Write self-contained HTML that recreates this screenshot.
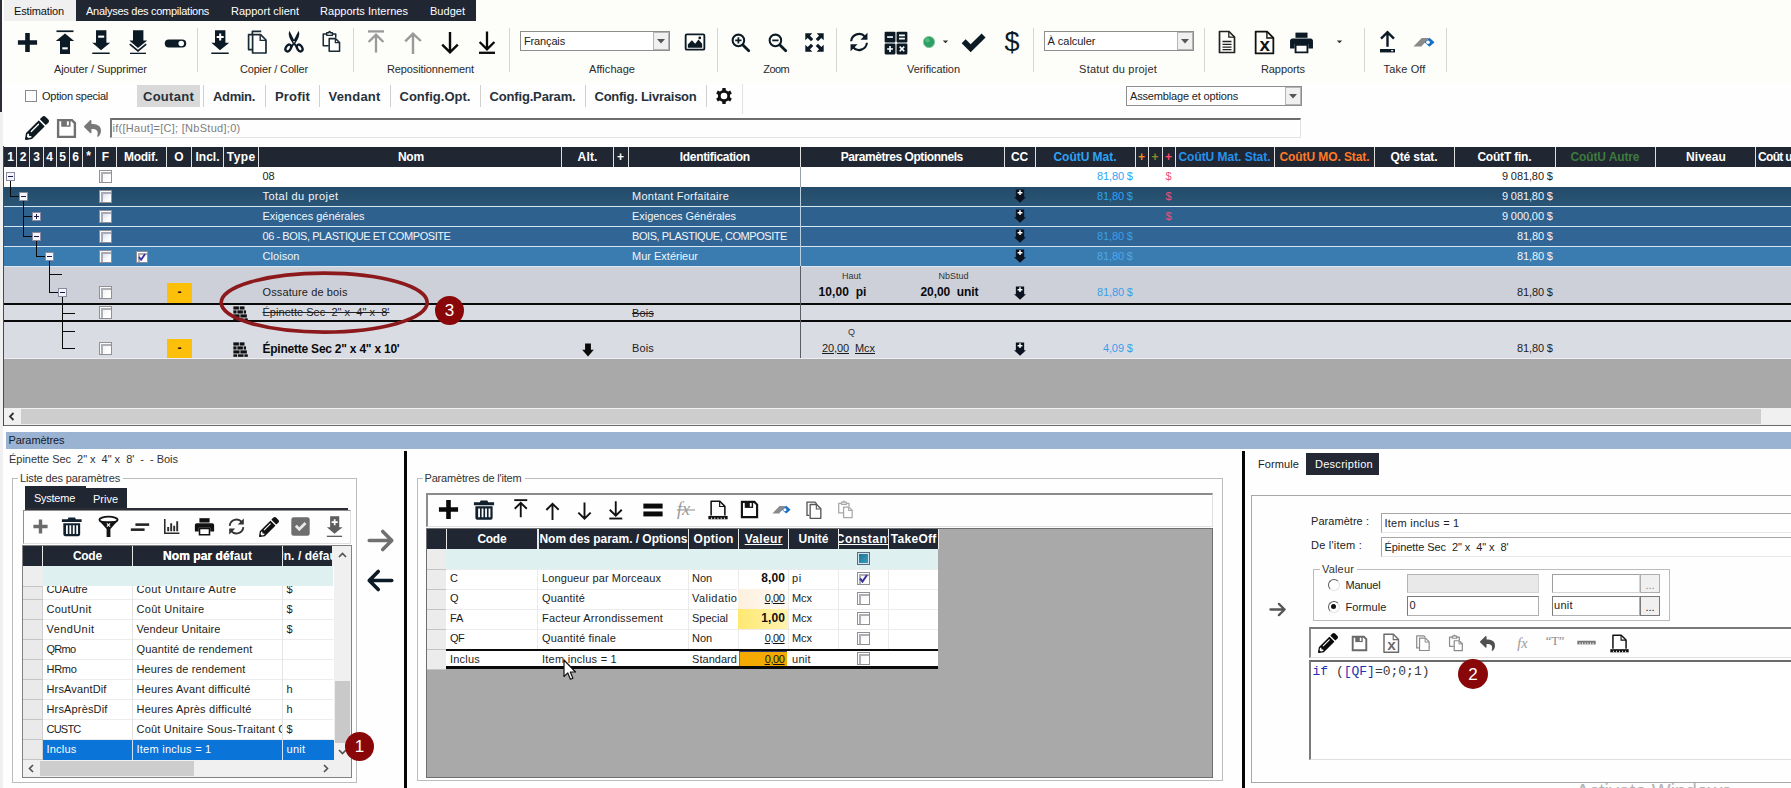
<!DOCTYPE html>
<html lang="fr"><head><meta charset="utf-8"><title>Estimation</title>
<style>
html,body{margin:0;padding:0;}
body{width:1791px;height:788px;overflow:hidden;background:#fefefe;font-family:"Liberation Sans", sans-serif;font-size:11px;color:#1a1a1a;}
#app{position:relative;width:1791px;height:788px;overflow:hidden;}
#app div,#app span,#app svg{position:absolute;box-sizing:border-box;}
#app span{white-space:pre;}
#app svg{overflow:visible;}
</style></head><body>
<div id="app">
<div style="left:0px;top:0px;width:1791px;height:83px;background:#fdfdfa;"></div>
<div style="left:0px;top:112px;width:2.5px;height:676px;background:#f0f0f0;"></div>
<div style="left:0px;top:0px;width:1.5px;height:112px;background:#2a2d36;"></div>
<div style="left:76px;top:0px;width:400px;height:21px;background:#212633;"></div>
<div style="left:4px;top:0px;width:72px;height:21px;background:#f0f0f0;"></div>
<span style="left:14.00px;top:4.00px;line-height:14px;color:#111;letter-spacing:-0.136px;">Estimation</span>
<span style="left:86.00px;top:4.00px;line-height:14px;color:#fff;letter-spacing:-0.265px;">Analyses des compilations</span>
<span style="left:231.00px;top:4.00px;line-height:14px;color:#fff;letter-spacing:0.009px;">Rapport client</span>
<span style="left:320.00px;top:4.00px;line-height:14px;color:#fff;letter-spacing:0.033px;">Rapports Internes</span>
<span style="left:430.00px;top:4.00px;line-height:14px;color:#fff;letter-spacing:0.021px;">Budget</span>
<svg style="left:15.5px;top:30.5px;color:#0c1a26;" width="23" height="23" viewBox="0 0 24 24"><path fill="currentColor" d="M9.6 2h4.8v7.6H22v4.8h-7.6V22H9.6v-7.6H2V9.6h7.6z"/></svg>
<svg style="left:52.5px;top:29.5px;color:#0c1a26;" width="24" height="24" viewBox="0 0 24 24"><rect x="3.500" y="0.400" width="17" height="1.700" fill="currentColor"/><path fill="currentColor" d="M12 3.400 21.200 11H17V24H7V11H2.800z"/><rect x="9.300" y="17.300" width="5.400" height="2.100" fill="#fff"/></svg>
<svg style="left:88.5px;top:30.0px;color:#0c1a26;" width="24" height="24" viewBox="0 0 24 24"><rect x="3.300" y="22.500" width="17.400" height="1.500" fill="currentColor"/><path fill="currentColor" d="M7 0.300h10.400v12.500h3.800L12 20.200 3.300 12.800H7z"/><rect x="9.200" y="5.600" width="6" height="2.100" fill="#fff"/></svg>
<svg style="left:126.0px;top:30.0px;color:#0c1a26;" width="24" height="24" viewBox="0 0 24 24"><rect x="4" y="22.700" width="16" height="1.300" fill="currentColor"/><path fill="currentColor" d="M7 0.300h10.400v10.200h3.800L12 18 3.300 10.500H7z"/><path fill="none" stroke="currentColor" stroke-width="1.700" d="M3.800 14.200 12 21 20.200 14.200"/></svg>
<svg style="left:163.5px;top:31.5px;color:#0c1a26;" width="23" height="23" viewBox="0 0 24 24"><rect x="0.800" y="7.700" width="22.400" height="8.600" rx="4.300" fill="currentColor"/><circle cx="18" cy="12" r="2.900" fill="#fff"/></svg>
<svg style="left:208.0px;top:30.0px;color:#0c1a26;" width="24" height="24" viewBox="0 0 24 24"><rect x="3.300" y="22.500" width="17.400" height="1.500" fill="currentColor"/><path fill="currentColor" d="M7 0.300h10.400v12.500h3.800L12 20.200 3.300 12.800H7z"/><path fill="#fff" d="M11.200 3.600h2v2.500h2.500v2h-2.500v2.500h-2V8.100H8.700v-2h2.500z"/></svg>
<svg style="left:245.0px;top:30.0px;color:#1a2a36;" width="24" height="24" viewBox="0 0 24 24"><path fill="none" stroke="currentColor" stroke-width="1.700" stroke-linejoin="round" d="M7.400 4.600V1.400h8.800M7.400 4.600H3.600v15h3.600"/><path fill="#fff" stroke="currentColor" stroke-width="1.700" stroke-linejoin="round" d="M7.600 4.600h8l5.400 5.400V23H7.600z"/><path fill="none" stroke="currentColor" stroke-width="1.400" d="M15.200 4.800v5.600h5.600"/></svg>
<svg style="left:282.0px;top:30.0px;color:#0c1a26;" width="24" height="24" viewBox="0 0 24 24"><g fill="none" stroke="currentColor" stroke-width="2.300"><ellipse cx="6.300" cy="18" rx="2.400" ry="3.700" transform="rotate(32 6.300 18)"/><ellipse cx="17.700" cy="18" rx="2.400" ry="3.700" transform="rotate(-32 17.700 18)"/></g><path fill="currentColor" d="M7.400 0.800c-1.300 2.800-.6 5.800 1 8.600l2.300 4-2.600 3 1.900 1.300L12 14.800l2 2.900 1.900-1.300-2.600-3 2.300-4c1.600-2.800 2.300-5.800 1-8.600L12 9.800z"/><circle cx="12" cy="11.800" r="0.800" fill="#fff"/></svg>
<svg style="left:320.0px;top:30.0px;color:#1a2a36;" width="23" height="23" viewBox="0 0 24 24"><path fill="none" stroke="currentColor" stroke-width="1.6" stroke-linejoin="round" d="M9 16.400H3.400V4.200h3.400M13 4.200h3.400v4"/><path fill="none" stroke="currentColor" stroke-width="1.5" stroke-linejoin="round" d="M7 5.600V2.800h2.200c0-1.800 1.600-1.800 1.600 0H13v2.800z"/><path fill="#fff" stroke="currentColor" stroke-width="1.6" stroke-linejoin="round" d="M9.600 9h6.600l4.200 4v9.200H9.600z"/><path fill="none" stroke="currentColor" stroke-width="1.3" d="M16 9.200v4h4.200"/></svg>
<svg style="left:364.0px;top:30.0px;color:#9a9a9a;" width="24" height="24" viewBox="0 0 24 24"><g fill="none" stroke="currentColor" stroke-width="2.300"><path d="M4 1.400h16"/><path d="M12 22.500V5M4.600 12 12 4.600l7.400 7.400"/></g></svg>
<svg style="left:401.0px;top:30.0px;color:#9a9a9a;" width="24" height="24" viewBox="0 0 24 24"><g fill="none" stroke="currentColor" stroke-width="2.400"><path d="M12 24V4M4.200 11.400 12 3.600l7.800 7.400"/></g></svg>
<svg style="left:438.0px;top:30.0px;color:#0a0a0a;" width="24" height="24" viewBox="0 0 24 24"><g fill="none" stroke="currentColor" stroke-width="2.400"><path d="M12 2V22M4.200 14.600 12 22.400l7.800-7.800"/></g></svg>
<svg style="left:475.0px;top:30.0px;color:#0a0a0a;" width="24" height="24" viewBox="0 0 24 24"><g fill="none" stroke="currentColor" stroke-width="2.300"><path d="M4 22.800h16"/><path d="M12 1.500V19M4.600 12 12 19.400l7.400-7.400"/></g></svg>
<svg style="left:684.0px;top:31.0px;color:#0c1a26;" width="22" height="22" viewBox="0 0 24 24"><rect x="1.800" y="3.600" width="20.400" height="16.800" rx="1.400" fill="none" stroke="currentColor" stroke-width="2"/><path fill="currentColor" d="M4.200 18.200v-3.400L8.600 10.200l3.600 3.800 3.600-4.600 4 4.600v4.200z"/><circle cx="17.200" cy="7.600" r="1.500" fill="currentColor"/></svg>
<svg style="left:729.5px;top:31.5px;color:#0c1a26;" width="21" height="21" viewBox="0 0 24 24"><circle cx="9.600" cy="9.600" r="6.600" fill="none" stroke="currentColor" stroke-width="2.300"/><path stroke="currentColor" stroke-width="3.200" stroke-linecap="round" d="M14.800 14.800 21.400 21.400"/><path stroke="currentColor" stroke-width="2" d="M6 9.600h7.200M9.600 6v7.200"/></svg>
<svg style="left:766.5px;top:31.5px;color:#0c1a26;" width="21" height="21" viewBox="0 0 24 24"><circle cx="9.600" cy="9.600" r="6.600" fill="none" stroke="currentColor" stroke-width="2.300"/><path stroke="currentColor" stroke-width="3.200" stroke-linecap="round" d="M14.800 14.800 21.400 21.400"/><path stroke="currentColor" stroke-width="2" d="M6 9.600h7.200"/></svg>
<svg style="left:803.5px;top:31.5px;color:#0c1a26;" width="21" height="21" viewBox="0 0 24 24"><g fill="currentColor"><path d="M1.500 1.500h8L6.800 4.200l3.800 3.800-2.600 2.600-3.800-3.800L1.500 9.500z"/><path d="M22.500 1.500v8l-2.700-2.700-3.800 3.800-2.600-2.600 3.800-3.800L14.500 1.500z"/><path d="M1.500 22.500v-8l2.700 2.700 3.800-3.800 2.600 2.600-3.800 3.800L9.500 22.500z"/><path d="M22.500 22.500h-8l2.700-2.700-3.800-3.800 2.600-2.600 3.800 3.800L22.500 14.500z"/></g></svg>
<svg style="left:848.0px;top:31.0px;color:#0c1a26;" width="22" height="22" viewBox="0 0 24 24"><g fill="none" stroke="currentColor" stroke-width="2.300"><path d="M3.400 11.200A8.700 8.700 0 0 1 18.600 6.200"/><path d="M20.600 12.800A8.700 8.700 0 0 1 5.400 17.800"/></g><path fill="currentColor" d="M21.200 2v7.600h-7.600z"/><path fill="currentColor" d="M2.800 22v-7.600h7.600z"/></svg>
<svg style="left:883.0px;top:29.5px;color:#0c1a26;" width="26" height="26" viewBox="0 0 24 24"><g fill="currentColor"><rect x="1.500" y="1.500" width="10" height="10" rx="1"/><rect x="12.500" y="1.500" width="10" height="10" rx="1"/><rect x="1.500" y="12.500" width="10" height="10" rx="1"/><rect x="12.500" y="12.500" width="10" height="10" rx="1"/></g><g stroke="#fff" stroke-width="1.500" fill="none"><path d="M3.800 6.500h5.400"/><path d="M14.800 5h5.400M14.800 8h5.400"/><path d="M3.800 17.500h5.400M6.500 14.800v5.400"/><path d="M15.400 15.400l4.200 4.200M19.600 15.400l-4.200 4.200"/></g></svg>
<svg style="left:920.0px;top:32.5px;color:#0c1a26;" width="18" height="18" viewBox="0 0 24 24"><circle cx="12" cy="12" r="7.500" fill="#2e9e63" stroke="#7fc9a0" stroke-width="1.200"/><circle cx="10" cy="9.500" r="3" fill="#6fd09a" opacity=".55"/></svg>
<svg style="left:939.0px;top:34.5px;color:#333;" width="13" height="13" viewBox="0 0 24 24"><path fill="currentColor" d="M7 10h10l-5 5z"/></svg>
<svg style="left:960.0px;top:28.5px;color:#0c1a26;" width="27" height="27" viewBox="0 0 24 24"><path fill="currentColor" d="M1.500 12.600 5 9.100l4.500 4.500L19.200 4l3.500 3.500L9.500 20.700z"/></svg>
<svg style="left:999.0px;top:29.0px;color:#0c1a26;" width="26" height="26" viewBox="0 0 24 24"><text x="12" y="20.500" text-anchor="middle" font-family="Liberation Sans, sans-serif" font-size="25" fill="currentColor">$</text></svg>
<svg style="left:1215.0px;top:30.0px;color:#222;" width="24" height="24" viewBox="0 0 24 24"><path fill="none" stroke="currentColor" stroke-width="1.700" stroke-linejoin="round" d="M4.500 1.500h9.500l5.500 5.500V22.500h-15z"/><path fill="none" stroke="currentColor" stroke-width="1.300" d="M13.800 1.700v5.500h5.500"/><path stroke="currentColor" stroke-width="1.300" d="M7.500 11.500h9M7.500 14.300h9M7.500 17.100h9M7.500 19.700h9"/></svg>
<svg style="left:1252.0px;top:29.5px;color:#111;" width="25" height="25" viewBox="0 0 24 24"><path fill="none" stroke="currentColor" stroke-width="1.700" stroke-linejoin="round" d="M3.500 1.500h11l6 6V22.500h-17z"/><path fill="none" stroke="currentColor" stroke-width="1.300" d="M14.300 1.700v6h6"/><text x="12.200" y="20.300" text-anchor="middle" font-family="Liberation Sans, sans-serif" font-weight="700" font-size="18" fill="currentColor">x</text></svg>
<svg style="left:1288.5px;top:29.5px;color:#0c1a26;" width="25" height="25" viewBox="0 0 24 24"><path fill="currentColor" d="M6.200 2.500h11.600v5H6.200z"/><path fill="currentColor" d="M3.200 8.200h17.600c1.200 0 2.200 1 2.200 2.200v7.400h-4.400v-4.300H5.400v4.300H1v-7.400c0-1.200 1-2.200 2.200-2.200z"/><path fill="#fff" stroke="currentColor" stroke-width="1.800" d="M6.300 14.300h11.400v7.200H6.300z"/></svg>
<svg style="left:1333.0px;top:34.5px;color:#333;" width="13" height="13" viewBox="0 0 24 24"><path fill="currentColor" d="M7 10h10l-5 5z"/></svg>
<svg style="left:1375.0px;top:29.0px;color:#0c1a26;" width="25" height="25" viewBox="0 0 24 24"><g fill="none" stroke="currentColor" stroke-width="2.300"><path d="M12 17V3M5.800 9.200 12 3l6.200 6.200"/></g><rect x="4.800" y="19.200" width="14.400" height="3.300" fill="currentColor"/><rect x="15.500" y="20.200" width="2" height="1.200" fill="#fff"/></svg>
<svg style="left:1413.0px;top:31.0px;color:#0c1a26;" width="22" height="22" viewBox="0 0 24 24"><path fill="#8a8a8a" d="M0.500 17 9.500 7.600h8L9 17z"/><path fill="#1a6fc4" d="M12.500 12.300 18 7.400 23.500 12.300 18 17.200z"/><circle cx="16.300" cy="12.300" r="2" fill="#fff"/></svg>
<div style="left:197px;top:28px;width:1px;height:44px;background:#d6d6d6;"></div>
<div style="left:353px;top:28px;width:1px;height:44px;background:#d6d6d6;"></div>
<div style="left:509px;top:28px;width:1px;height:44px;background:#d6d6d6;"></div>
<div style="left:717px;top:28px;width:1px;height:44px;background:#d6d6d6;"></div>
<div style="left:836px;top:28px;width:1px;height:44px;background:#d6d6d6;"></div>
<div style="left:1033px;top:28px;width:1px;height:44px;background:#d6d6d6;"></div>
<div style="left:1204px;top:28px;width:1px;height:44px;background:#d6d6d6;"></div>
<div style="left:1364px;top:28px;width:1px;height:44px;background:#d6d6d6;"></div>
<div style="left:1446px;top:28px;width:1px;height:44px;background:#d6d6d6;"></div>
<span style="left:53.95px;top:62.00px;line-height:14px;color:#2a2a2a;letter-spacing:-0.093px;">Ajouter / Supprimer</span>
<span style="left:239.92px;top:62.00px;line-height:14px;color:#2a2a2a;letter-spacing:-0.154px;">Copier / Coller</span>
<span style="left:386.95px;top:62.00px;line-height:14px;color:#2a2a2a;letter-spacing:-0.104px;">Repositionnement</span>
<span style="left:589.02px;top:62.00px;line-height:14px;color:#2a2a2a;letter-spacing:0.036px;">Affichage</span>
<span style="left:763.23px;top:62.00px;line-height:14px;color:#2a2a2a;letter-spacing:-0.531px;">Zoom</span>
<span style="left:906.97px;top:62.00px;line-height:14px;color:#2a2a2a;letter-spacing:-0.068px;">Verification</span>
<span style="left:1079.11px;top:62.00px;line-height:14px;color:#2a2a2a;letter-spacing:0.212px;">Statut du projet</span>
<span style="left:1260.96px;top:62.00px;line-height:14px;color:#2a2a2a;letter-spacing:-0.080px;">Rapports</span>
<span style="left:1383.58px;top:62.00px;line-height:14px;color:#2a2a2a;letter-spacing:0.154px;">Take Off</span>
<div style="left:520px;top:31px;width:150px;height:20px;background:#fff;border:1px solid #8e8e8e;"></div>
<div style="left:653px;top:32px;width:16px;height:18px;background:#f0f0f0;border:1px solid #b4b4b4;"></div>
<svg style="left:657px;top:39.0px" width="8" height="5" viewBox="0 0 8 5"><path d="M0 0h8L4 4.500z" fill="#555"/></svg>
<span style="left:524.00px;top:33.50px;line-height:14px;color:#222;letter-spacing:-0.148px;">Français</span>
<div style="left:1043.5px;top:31px;width:150.5px;height:20px;background:#fff;border:1px solid #8e8e8e;"></div>
<div style="left:1177.0px;top:32px;width:16px;height:18px;background:#f0f0f0;border:1px solid #b4b4b4;"></div>
<svg style="left:1181.0px;top:39.0px" width="8" height="5" viewBox="0 0 8 5"><path d="M0 0h8L4 4.500z" fill="#555"/></svg>
<span style="left:1047.50px;top:33.50px;line-height:14px;color:#222;letter-spacing:-0.030px;">À calculer</span>
<div style="left:1126px;top:85.5px;width:175.5px;height:20px;background:#fff;border:1px solid #8e8e8e;"></div>
<div style="left:1284.5px;top:86.5px;width:16px;height:18px;background:#f0f0f0;border:1px solid #b4b4b4;"></div>
<svg style="left:1288.5px;top:93.5px" width="8" height="5" viewBox="0 0 8 5"><path d="M0 0h8L4 4.500z" fill="#555"/></svg>
<span style="left:1130.00px;top:88.90px;line-height:14px;color:#222;letter-spacing:-0.157px;">Assemblage et options</span>
<div style="left:25px;top:90px;width:12px;height:12px;background:#fff;border:1px solid #8a8a8a;"></div>
<span style="left:42.00px;top:89.00px;line-height:14px;color:#222;letter-spacing:-0.266px;">Option special</span>
<div style="left:137px;top:85px;width:63px;height:22px;background:#d9d9d9;"></div>
<span style="left:143.00px;top:88.70px;line-height:16px;font-size:13px;font-weight:700;color:#27313b;letter-spacing:0.270px;">Coutant</span>
<span style="left:213.00px;top:88.70px;line-height:16px;font-size:13px;font-weight:700;color:#27313b;letter-spacing:-0.344px;">Admin.</span>
<span style="left:275.00px;top:88.70px;line-height:16px;font-size:13px;font-weight:700;color:#27313b;letter-spacing:0.174px;">Profit</span>
<span style="left:328.50px;top:88.70px;line-height:16px;font-size:13px;font-weight:700;color:#27313b;letter-spacing:0.203px;">Vendant</span>
<span style="left:399.50px;top:88.70px;line-height:16px;font-size:13px;font-weight:700;color:#27313b;letter-spacing:0.021px;">Config.Opt.</span>
<span style="left:489.50px;top:88.70px;line-height:16px;font-size:13px;font-weight:700;color:#27313b;letter-spacing:-0.163px;">Config.Param.</span>
<span style="left:594.50px;top:88.70px;line-height:16px;font-size:13px;font-weight:700;color:#27313b;letter-spacing:-0.245px;">Config. Livraison</span>
<div style="left:203px;top:85px;width:1px;height:22px;background:#cfcfcf;"></div>
<div style="left:265px;top:85px;width:1px;height:22px;background:#cfcfcf;"></div>
<div style="left:319px;top:85px;width:1px;height:22px;background:#cfcfcf;"></div>
<div style="left:390px;top:85px;width:1px;height:22px;background:#cfcfcf;"></div>
<div style="left:480px;top:85px;width:1px;height:22px;background:#cfcfcf;"></div>
<div style="left:585px;top:85px;width:1px;height:22px;background:#cfcfcf;"></div>
<div style="left:706px;top:85px;width:1px;height:22px;background:#cfcfcf;"></div>
<div style="left:742px;top:84px;width:1px;height:30px;background:#e2e2e2;"></div>
<svg style="left:715.0px;top:87.0px;color:#111;" width="18" height="18" viewBox="0 0 24 24"><path fill="currentColor" fill-rule="evenodd" d="M9.58 4.17 9.81 1.22 14.19 1.22 14.42 4.17 17.57 5.98 20.24 4.72 22.43 8.50 20.00 10.18 20.00 13.82 22.43 15.50 20.24 19.28 17.57 18.02 14.42 19.83 14.19 22.78 9.81 22.78 9.58 19.83 6.43 18.02 3.76 19.28 1.57 15.50 4.00 13.82 4.00 10.18 1.57 8.50 3.76 4.72 6.43 5.98z M12 7.600a4.400 4.400 0 1 0 0 8.800 4.400 4.400 0 0 0 0-8.800z"/></svg>
<svg style="left:24.8px;top:116.0px;color:#0d1a20;" width="24" height="24" viewBox="0 0 512 512"><path fill="currentColor" d="M497.9 142.1l-46.1 46.1c-4.7 4.7-12.3 4.7-17 0l-111-111c-4.7-4.7-4.7-12.3 0-17l46.1-46.1c18.7-18.7 49.1-18.7 67.900 0l60.1 60.1c18.8 18.700 18.8 49.100 0 67.900zM284.2 99.800L21.600 362.400.4 483.900c-2.900 16.400 11.400 30.600 27.800 27.800l121.500-21.300 262.600-262.600c4.700-4.700 4.700-12.300 0-17l-111-111c-4.800-4.700-12.400-4.700-17.100 0zM124.100 339.900c-5.500-5.500-5.500-14.300 0-19.800l154-154c5.500-5.500 14.300-5.500 19.800 0s5.500 14.300 0 19.800l-154 154c-5.500 5.500-14.300 5.500-19.800 0zM88 424h48v36.300l-64.500 11.300-31.100-31.100L51.700 376H88v48z"/></svg>
<svg style="left:55.5px;top:117.5px;color:#707070;" width="21" height="21" viewBox="0 0 24 24"><path fill="none" stroke="currentColor" stroke-width="2.700" stroke-linejoin="miter" d="M2.400 2.400h15.800l3.400 3.400v15.800H2.400z"/><path fill="currentColor" d="M6 2.400h10.600v7.600H6z"/><rect x="12.400" y="3.800" width="2.300" height="4.600" fill="#fff"/></svg>
<svg style="left:84.2px;top:119.5px;color:#787878;" width="17" height="17" viewBox="0 0 512 512"><g transform="translate(0,-36.5) scale(1,1.14)"><path fill="currentColor" d="M8.309 189.836L184.313 37.851C199.719 24.546 224 35.347 224 56.015v80.053c160.629 1.839 288 34.032 288 186.258 0 61.441-39.581 122.309-83.333 154.132-13.653 9.931-33.111-2.533-28.077-18.631 45.344-145.012-21.507-183.510-176.590-185.742V360c0 20.700-24.300 31.453-39.687 18.164l-176.004-152c-11.071-9.562-11.086-26.753 0-36.328z"/></g></svg>
<div style="left:110px;top:118px;width:1191px;height:20px;background:#fefefe;border-top:2px solid #6d6d6d;border-left:2px solid #7a7a7a;border-bottom:1px solid #e3e3e3;border-right:1px solid #e3e3e3;"></div>
<span style="left:112.50px;top:120.50px;line-height:14px;color:#7d7d7d;letter-spacing:0.279px;">if([Haut]=[C]; [NbStud];0)</span>
<div style="left:3px;top:146px;width:1px;height:280px;background:#4a4a4a;"></div>
<div style="left:4px;top:146.5px;width:1787px;height:20.5px;background:#212633;"></div>
<div style="left:4px;top:167px;width:1787px;height:20px;background:#ffffff;"></div>
<div style="left:4px;top:187px;width:1787px;height:19px;background:#27506f;"></div>
<div style="left:4px;top:207px;width:1787px;height:19px;background:#2e618e;"></div>
<div style="left:4px;top:227px;width:1787px;height:19px;background:#306596;"></div>
<div style="left:4px;top:247px;width:1787px;height:19px;background:#3a7bb0;"></div>
<div style="left:4px;top:266px;width:1787px;height:37px;background:#cdd0d9;"></div>
<div style="left:4px;top:305px;width:1787px;height:15px;background:#dadce4;"></div>
<div style="left:4px;top:322px;width:1787px;height:36px;background:#dadce4;"></div>
<div style="left:4px;top:187px;width:1787px;height:19px;background:linear-gradient(#244b6a,#2a5576);"></div>
<div style="left:4px;top:206px;width:1787px;height:1px;background:#d4e6f2;"></div>
<div style="left:4px;top:226px;width:1787px;height:1px;background:#d4e6f2;"></div>
<div style="left:4px;top:246px;width:1787px;height:1px;background:#d4e6f2;"></div>
<div style="left:4px;top:266px;width:1787px;height:1px;background:#dde8f2;"></div>
<div style="left:4px;top:303px;width:1787px;height:2px;background:#0a0a0a;"></div>
<div style="left:4px;top:320px;width:1787px;height:2px;background:#0a0a0a;"></div>
<div style="left:4px;top:358px;width:1787px;height:1px;background:#eeeef2;"></div>
<div style="left:4px;top:359px;width:1787px;height:49px;background:#a9a9a9;"></div>
<div style="left:16px;top:147px;width:1px;height:20px;background:#dedede;"></div>
<div style="left:29px;top:147px;width:1px;height:20px;background:#dedede;"></div>
<div style="left:43px;top:147px;width:1px;height:20px;background:#dedede;"></div>
<div style="left:56px;top:147px;width:1px;height:20px;background:#dedede;"></div>
<div style="left:69px;top:147px;width:1px;height:20px;background:#dedede;"></div>
<div style="left:82px;top:147px;width:1px;height:20px;background:#dedede;"></div>
<div style="left:95px;top:147px;width:1px;height:20px;background:#dedede;"></div>
<div style="left:116px;top:147px;width:1px;height:20px;background:#dedede;"></div>
<div style="left:166px;top:147px;width:1px;height:20px;background:#dedede;"></div>
<div style="left:191px;top:147px;width:1px;height:20px;background:#dedede;"></div>
<div style="left:223px;top:147px;width:1px;height:20px;background:#dedede;"></div>
<div style="left:258px;top:147px;width:1px;height:20px;background:#dedede;"></div>
<div style="left:561px;top:147px;width:1px;height:20px;background:#dedede;"></div>
<div style="left:613px;top:147px;width:1px;height:20px;background:#dedede;"></div>
<div style="left:628px;top:147px;width:1px;height:20px;background:#dedede;"></div>
<div style="left:800px;top:147px;width:1px;height:20px;background:#dedede;"></div>
<div style="left:1004px;top:147px;width:1px;height:20px;background:#dedede;"></div>
<div style="left:1035px;top:147px;width:1px;height:20px;background:#dedede;"></div>
<div style="left:1135px;top:147px;width:1px;height:20px;background:#dedede;"></div>
<div style="left:1148px;top:147px;width:1px;height:20px;background:#dedede;"></div>
<div style="left:1162px;top:147px;width:1px;height:20px;background:#dedede;"></div>
<div style="left:1175px;top:147px;width:1px;height:20px;background:#dedede;"></div>
<div style="left:1274px;top:147px;width:1px;height:20px;background:#dedede;"></div>
<div style="left:1374px;top:147px;width:1px;height:20px;background:#dedede;"></div>
<div style="left:1454px;top:147px;width:1px;height:20px;background:#dedede;"></div>
<div style="left:1555px;top:147px;width:1px;height:20px;background:#dedede;"></div>
<div style="left:1655px;top:147px;width:1px;height:20px;background:#dedede;"></div>
<div style="left:1755px;top:147px;width:1px;height:20px;background:#dedede;"></div>
<span style="left:7.16px;top:148.50px;line-height:16px;font-size:12px;font-weight:700;color:#fff;">1</span>
<span style="left:19.66px;top:148.50px;line-height:16px;font-size:12px;font-weight:700;color:#fff;">2</span>
<span style="left:33.16px;top:148.50px;line-height:16px;font-size:12px;font-weight:700;color:#fff;">3</span>
<span style="left:46.16px;top:148.50px;line-height:16px;font-size:12px;font-weight:700;color:#fff;">4</span>
<span style="left:59.16px;top:148.50px;line-height:16px;font-size:12px;font-weight:700;color:#fff;">5</span>
<span style="left:72.16px;top:148.50px;line-height:16px;font-size:12px;font-weight:700;color:#fff;">6</span>
<span style="left:86.16px;top:147.50px;line-height:16px;font-size:12px;font-weight:700;color:#fff;">*</span>
<span style="left:101.83px;top:148.50px;line-height:16px;font-size:12px;font-weight:700;color:#fff;">F</span>
<span style="left:123.89px;top:148.50px;line-height:16px;font-size:12px;font-weight:700;color:#fff;letter-spacing:-0.221px;">Modif.</span>
<span style="left:174.33px;top:148.50px;line-height:16px;font-size:12px;font-weight:700;color:#fff;">O</span>
<span style="left:195.50px;top:148.50px;line-height:16px;font-size:12px;font-weight:700;color:#fff;">Incl.</span>
<span style="left:226.73px;top:148.50px;line-height:16px;font-size:12px;font-weight:700;color:#fff;letter-spacing:0.469px;">Type</span>
<span style="left:397.89px;top:148.50px;line-height:16px;font-size:12px;font-weight:700;color:#fff;letter-spacing:-0.224px;">Nom</span>
<span style="left:577.58px;top:148.50px;line-height:16px;font-size:12px;font-weight:700;color:#fff;letter-spacing:0.164px;">Alt.</span>
<span style="left:616.99px;top:148.50px;line-height:16px;font-size:12px;font-weight:700;color:#fff;">+</span>
<span style="left:679.83px;top:148.50px;line-height:16px;font-size:12px;font-weight:700;color:#fff;letter-spacing:-0.334px;">Identification</span>
<span style="left:840.78px;top:148.50px;line-height:16px;font-size:12px;font-weight:700;color:#fff;letter-spacing:-0.447px;">Paramètres Optionnels</span>
<span style="left:1010.91px;top:148.50px;line-height:16px;font-size:12px;font-weight:700;color:#fff;letter-spacing:-0.172px;">CC</span>
<span style="left:1053.48px;top:148.50px;line-height:16px;font-size:12px;font-weight:700;color:#2ea3f2;letter-spacing:-0.033px;">CoûtU Mat.</span>
<span style="left:1137.99px;top:148.50px;line-height:16px;font-size:12px;font-weight:700;color:#ff8a1c;">+</span>
<span style="left:1151.49px;top:148.50px;line-height:16px;font-size:12px;font-weight:700;color:#8c8a2a;">+</span>
<span style="left:1164.99px;top:148.50px;line-height:16px;font-size:12px;font-weight:700;color:#ff4a6e;">+</span>
<span style="left:1178.48px;top:148.50px;line-height:16px;font-size:12px;font-weight:700;color:#2492ee;letter-spacing:-0.042px;">CoûtU Mat. Stat.</span>
<span style="left:1279.46px;top:148.50px;line-height:16px;font-size:12px;font-weight:700;color:#ff7a26;letter-spacing:-0.089px;">CoûtU MO. Stat.</span>
<span style="left:1390.44px;top:148.50px;line-height:16px;font-size:12px;font-weight:700;color:#fff;letter-spacing:-0.113px;">Qté stat.</span>
<span style="left:1477.40px;top:148.50px;line-height:16px;font-size:12px;font-weight:700;color:#fff;letter-spacing:-0.198px;">CoûtT fin.</span>
<span style="left:1570.44px;top:148.50px;line-height:16px;font-size:12px;font-weight:700;color:#3d7a3d;letter-spacing:-0.111px;">CoûtU Autre</span>
<span style="left:1686.05px;top:148.50px;line-height:16px;font-size:12px;font-weight:700;color:#fff;letter-spacing:0.107px;">Niveau</span>
<span style="left:1758.00px;top:148.50px;line-height:16px;font-size:12px;font-weight:700;color:#fff;letter-spacing:-0.667px;">Coût u</span>
<div style="left:800px;top:167px;width:1px;height:20px;background:#9aa0a8;"></div>
<div style="left:800px;top:187px;width:1px;height:80px;background:#b8cfe0;"></div>
<div style="left:800px;top:266px;width:1px;height:92px;background:#5a5d66;"></div>
<div style="left:10px;top:181px;width:1.2px;height:15.5px;background:#0a0a0a;"></div>
<div style="left:10px;top:195.5px;width:9px;height:1.2px;background:#0a0a0a;"></div>
<div style="left:23px;top:200px;width:1.2px;height:37px;background:#0a0a0a;"></div>
<div style="left:23px;top:215.5px;width:9px;height:1.2px;background:#0a0a0a;"></div>
<div style="left:23px;top:235.5px;width:9px;height:1.2px;background:#0a0a0a;"></div>
<div style="left:36px;top:241px;width:1.2px;height:16px;background:#0a0a0a;"></div>
<div style="left:36px;top:255.5px;width:9px;height:1.2px;background:#0a0a0a;"></div>
<div style="left:49px;top:261px;width:1.2px;height:32px;background:#0a0a0a;"></div>
<div style="left:49px;top:273.5px;width:13px;height:1.2px;background:#0a0a0a;"></div>
<div style="left:49px;top:291.5px;width:9px;height:1.2px;background:#0a0a0a;"></div>
<div style="left:62px;top:297px;width:1.2px;height:52px;background:#0a0a0a;"></div>
<div style="left:62px;top:312.5px;width:12.5px;height:1.2px;background:#0a0a0a;"></div>
<div style="left:62px;top:330.5px;width:12.5px;height:1.2px;background:#0a0a0a;"></div>
<div style="left:62px;top:347.5px;width:12.5px;height:1.2px;background:#0a0a0a;"></div>
<div style="left:6px;top:172px;width:9px;height:9px;background:#f4f4fb;border:1px solid #8a8aa0;"></div>
<div style="left:8px;top:176px;width:5px;height:1px;background:#1a1a50;"></div>
<div style="left:19px;top:192px;width:9px;height:9px;background:#f4f4fb;border:1px solid #8a8aa0;"></div>
<div style="left:21px;top:196px;width:5px;height:1px;background:#1a1a50;"></div>
<div style="left:32px;top:212px;width:9px;height:9px;background:#f4f4fb;border:1px solid #8a8aa0;"></div>
<div style="left:34px;top:216px;width:5px;height:1px;background:#1a1a50;"></div>
<div style="left:36px;top:214px;width:1px;height:5px;background:#1a1a50;"></div>
<div style="left:32px;top:232px;width:9px;height:9px;background:#f4f4fb;border:1px solid #8a8aa0;"></div>
<div style="left:34px;top:236px;width:5px;height:1px;background:#1a1a50;"></div>
<div style="left:45px;top:252px;width:9px;height:9px;background:#f4f4fb;border:1px solid #8a8aa0;"></div>
<div style="left:47px;top:256px;width:5px;height:1px;background:#1a1a50;"></div>
<div style="left:58px;top:288px;width:9px;height:9px;background:#f4f4fb;border:1px solid #8a8aa0;"></div>
<div style="left:60px;top:292px;width:5px;height:1px;background:#1a1a50;"></div>
<div style="left:99px;top:170px;width:13px;height:13px;background:linear-gradient(135deg,#f4f4f6 30%,#fff 80%);border:1px solid #909096;box-shadow:inset 1px 1px 0 #fbfbfb,inset 3px 3px 0 rgba(150,150,158,.75);"></div>
<div style="left:99px;top:190px;width:13px;height:13px;background:linear-gradient(135deg,#dbe4f6 30%,#fff 80%);border:1px solid #909096;box-shadow:inset 1px 1px 0 #fbfbfb,inset 3px 3px 0 rgba(150,150,158,.75);"></div>
<div style="left:99px;top:210px;width:13px;height:13px;background:linear-gradient(135deg,#dbe4f6 30%,#fff 80%);border:1px solid #909096;box-shadow:inset 1px 1px 0 #fbfbfb,inset 3px 3px 0 rgba(150,150,158,.75);"></div>
<div style="left:99px;top:230px;width:13px;height:13px;background:linear-gradient(135deg,#dbe4f6 30%,#fff 80%);border:1px solid #909096;box-shadow:inset 1px 1px 0 #fbfbfb,inset 3px 3px 0 rgba(150,150,158,.75);"></div>
<div style="left:99px;top:250px;width:13px;height:13px;background:linear-gradient(135deg,#dbe4f6 30%,#fff 80%);border:1px solid #909096;box-shadow:inset 1px 1px 0 #fbfbfb,inset 3px 3px 0 rgba(150,150,158,.75);"></div>
<div style="left:99px;top:286px;width:13px;height:13px;background:linear-gradient(135deg,#f4f4f6 30%,#fff 80%);border:1px solid #909096;box-shadow:inset 1px 1px 0 #fbfbfb,inset 3px 3px 0 rgba(150,150,158,.75);"></div>
<div style="left:99px;top:306px;width:13px;height:13px;background:linear-gradient(135deg,#f4f4f6 30%,#fff 80%);border:1px solid #909096;box-shadow:inset 1px 1px 0 #fbfbfb,inset 3px 3px 0 rgba(150,150,158,.75);"></div>
<div style="left:99px;top:342px;width:13px;height:13px;background:linear-gradient(135deg,#f4f4f6 30%,#fff 80%);border:1px solid #909096;box-shadow:inset 1px 1px 0 #fbfbfb,inset 3px 3px 0 rgba(150,150,158,.75);"></div>
<div style="left:135.5px;top:251px;width:12px;height:12px;background:linear-gradient(135deg,#f6f6f8 30%,#fff 80%);border:1px solid #909096;box-shadow:inset 1px 1px 0 #fbfbfb,inset 3px 3px 0 rgba(150,150,158,.75);"></div>
<svg style="left:137.5px;top:253px" width="8" height="8" viewBox="0 0 9 9"><path d="M1 4.500 3.500 7.500 8 1" fill="none" stroke="#3a32a0" stroke-width="2"/></svg>
<div style="left:166.5px;top:283px;width:25.5px;height:20px;background:#fdc00a;"></div>
<div style="left:166.5px;top:339px;width:25.5px;height:19px;background:#fdc00a;"></div>
<span style="left:177.50px;top:284.50px;line-height:14px;font-size:12px;font-weight:700;color:#111;">-</span>
<span style="left:177.50px;top:340.50px;line-height:14px;font-size:12px;font-weight:700;color:#111;">-</span>
<svg style="left:231.8px;top:305.2px;color:#111;" width="16.5" height="16.5" viewBox="0 0 24 24"><g fill="currentColor"><rect x="2" y="2" width="8" height="4.600"/><rect x="11.200" y="2" width="7" height="4.600"/><rect x="2" y="7.800" width="4.600" height="4.600"/><rect x="7.800" y="7.800" width="8" height="4.600"/><rect x="17" y="7.800" width="3.400" height="4.600"/><rect x="2" y="13.600" width="9" height="4.600"/><rect x="12.200" y="13.600" width="9.400" height="4.600"/><rect x="2" y="19.400" width="5.600" height="3.600"/><rect x="8.800" y="19.400" width="8" height="3.600"/><rect x="18" y="19.400" width="5" height="3.600"/></g></svg>
<svg style="left:231.8px;top:340.8px;color:#111;" width="16.5" height="16.5" viewBox="0 0 24 24"><g fill="currentColor"><rect x="2" y="2" width="8" height="4.600"/><rect x="11.200" y="2" width="7" height="4.600"/><rect x="2" y="7.800" width="4.600" height="4.600"/><rect x="7.800" y="7.800" width="8" height="4.600"/><rect x="17" y="7.800" width="3.400" height="4.600"/><rect x="2" y="13.600" width="9" height="4.600"/><rect x="12.200" y="13.600" width="9.400" height="4.600"/><rect x="2" y="19.400" width="5.600" height="3.600"/><rect x="8.800" y="19.400" width="8" height="3.600"/><rect x="18" y="19.400" width="5" height="3.600"/></g></svg>
<svg style="left:581.0px;top:342.5px;color:#0a0a0a;" width="14" height="14" viewBox="0 0 24 24"><path fill="currentColor" d="M7 1h10v10.500h5L12 23 2 11.500h5z"/></svg>
<span style="left:262.50px;top:168.50px;line-height:14px;color:#222;">08</span>
<span style="left:262.50px;top:188.50px;line-height:14px;color:#f2f6fa;letter-spacing:0.459px;">Total du projet</span>
<span style="left:262.50px;top:208.50px;line-height:14px;color:#f2f6fa;letter-spacing:-0.007px;">Exigences générales</span>
<span style="left:262.50px;top:228.50px;line-height:14px;color:#f2f6fa;letter-spacing:-0.428px;">06 - BOIS, PLASTIQUE ET COMPOSITE</span>
<span style="left:262.50px;top:248.50px;line-height:14px;color:#f2f6fa;letter-spacing:0.045px;">Cloison</span>
<span style="left:262.50px;top:284.50px;line-height:14px;color:#1c1c1c;letter-spacing:0.115px;">Ossature de bois</span>
<span style="left:262.50px;top:305.00px;line-height:14px;color:#222;letter-spacing:0.032px;text-decoration:line-through;">Épinette Sec  2" x  4" x  8'</span>
<span style="left:262.50px;top:341.50px;line-height:14px;font-size:12px;font-weight:700;color:#0a0a0a;letter-spacing:-0.230px;">Épinette Sec 2" x 4" x 10'</span>
<span style="left:632.00px;top:188.50px;line-height:14px;color:#f2f6fa;letter-spacing:0.246px;">Montant Forfaitaire</span>
<span style="left:632.00px;top:208.50px;line-height:14px;color:#f2f6fa;letter-spacing:-0.030px;">Exigences Générales</span>
<span style="left:632.00px;top:228.50px;line-height:14px;color:#f2f6fa;letter-spacing:-0.433px;">BOIS, PLASTIQUE, COMPOSITE</span>
<span style="left:632.00px;top:248.50px;line-height:14px;color:#f2f6fa;">Mur Extérieur</span>
<span style="left:632.00px;top:305.50px;line-height:14px;color:#222;letter-spacing:0.148px;text-decoration:line-through;">Bois</span>
<span style="left:632.00px;top:340.50px;line-height:14px;color:#1c1c1c;letter-spacing:0.148px;">Bois</span>
<span style="left:841.99px;top:269.00px;line-height:14px;font-size:9px;color:#333;">Haut</span>
<span style="left:938.48px;top:269.00px;line-height:14px;font-size:9px;color:#333;">NbStud</span>
<span style="left:818.50px;top:284.50px;line-height:14px;font-size:12px;font-weight:700;color:#0a0a0a;letter-spacing:0.069px;">10,00  pi</span>
<span style="left:920.50px;top:284.50px;line-height:14px;font-size:12px;font-weight:700;color:#0a0a0a;letter-spacing:-0.062px;">20,00  unit</span>
<span style="left:847.99px;top:325.00px;line-height:14px;font-size:9px;color:#333;">Q</span>
<span style="left:822.00px;top:340.50px;line-height:14px;color:#1c1c1c;letter-spacing:-0.106px;text-decoration:underline;">20,00</span>
<span style="left:855.00px;top:340.50px;line-height:14px;color:#1c1c1c;letter-spacing:-0.057px;text-decoration:underline;">Mcx</span>
<svg style="left:1011.5px;top:188.0px;color:#0b1220;" width="16" height="16" viewBox="0 0 24 24"><path fill="currentColor" d="M5.800 2.200h12.400v11.700h2.800L12 22 3 13.900h2.800z"/><path fill="#fff" d="M10.900 3.400h2.200v2.500h2.500v2.200h-2.500v2.500h-2.200V8.100H8.400V5.900h2.500z"/></svg>
<svg style="left:1011.5px;top:208.0px;color:#0b1220;" width="16" height="16" viewBox="0 0 24 24"><path fill="currentColor" d="M5.800 2.200h12.400v11.700h2.800L12 22 3 13.900h2.800z"/><path fill="#fff" d="M10.900 3.400h2.200v2.500h2.500v2.200h-2.500v2.500h-2.200V8.100H8.400V5.900h2.500z"/></svg>
<svg style="left:1011.5px;top:228.0px;color:#0b1220;" width="16" height="16" viewBox="0 0 24 24"><path fill="currentColor" d="M5.800 2.200h12.400v11.700h2.800L12 22 3 13.900h2.800z"/><path fill="#fff" d="M10.900 3.400h2.200v2.500h2.500v2.200h-2.500v2.500h-2.200V8.100H8.400V5.900h2.500z"/></svg>
<svg style="left:1011.5px;top:248.0px;color:#0b1220;" width="16" height="16" viewBox="0 0 24 24"><path fill="currentColor" d="M5.800 2.200h12.400v11.700h2.800L12 22 3 13.900h2.800z"/><path fill="#fff" d="M10.900 3.400h2.200v2.500h2.500v2.200h-2.500v2.500h-2.200V8.100H8.400V5.900h2.500z"/></svg>
<svg style="left:1011.5px;top:284.5px;color:#0b1220;" width="16" height="16" viewBox="0 0 24 24"><path fill="currentColor" d="M5.800 2.200h12.400v11.700h2.800L12 22 3 13.900h2.800z"/><path fill="#fff" d="M10.900 3.400h2.200v2.500h2.500v2.200h-2.500v2.500h-2.200V8.100H8.400V5.900h2.500z"/></svg>
<svg style="left:1011.5px;top:340.5px;color:#0b1220;" width="16" height="16" viewBox="0 0 24 24"><path fill="currentColor" d="M5.800 2.200h12.400v11.700h2.800L12 22 3 13.900h2.800z"/><path fill="#fff" d="M10.900 3.400h2.200v2.500h2.500v2.200h-2.500v2.500h-2.200V8.100H8.400V5.900h2.500z"/></svg>
<span style="left:1096.90px;top:168.50px;line-height:14px;color:#2ea3f2;letter-spacing:-0.100px;">81,80 $</span>
<span style="left:1096.90px;top:188.50px;line-height:14px;color:#2ea3f2;letter-spacing:-0.100px;">81,80 $</span>
<span style="left:1096.90px;top:228.50px;line-height:14px;color:#3c9fe6;letter-spacing:-0.100px;">81,80 $</span>
<span style="left:1096.90px;top:248.50px;line-height:14px;color:#4aa8ea;letter-spacing:-0.100px;">81,80 $</span>
<span style="left:1096.90px;top:284.50px;line-height:14px;color:#3a9fe8;letter-spacing:-0.100px;">81,80 $</span>
<span style="left:1102.90px;top:340.50px;line-height:14px;color:#3a9fe8;letter-spacing:-0.099px;">4,09 $</span>
<span style="left:1165.44px;top:168.50px;line-height:14px;color:#f0507a;">$</span>
<span style="left:1165.44px;top:188.50px;line-height:14px;color:#f0507a;">$</span>
<span style="left:1165.44px;top:208.50px;line-height:14px;color:#f0507a;">$</span>
<span style="left:1501.90px;top:168.50px;line-height:14px;color:#1c1c1c;letter-spacing:-0.100px;">9 081,80 $</span>
<span style="left:1501.90px;top:188.50px;line-height:14px;color:#f2f6fa;letter-spacing:-0.100px;">9 081,80 $</span>
<span style="left:1501.90px;top:208.50px;line-height:14px;color:#f2f6fa;letter-spacing:-0.100px;">9 000,00 $</span>
<span style="left:1516.90px;top:228.50px;line-height:14px;color:#f2f6fa;letter-spacing:-0.100px;">81,80 $</span>
<span style="left:1516.90px;top:248.50px;line-height:14px;color:#f2f6fa;letter-spacing:-0.100px;">81,80 $</span>
<span style="left:1516.90px;top:284.50px;line-height:14px;color:#1c1c1c;letter-spacing:-0.100px;">81,80 $</span>
<span style="left:1516.90px;top:340.50px;line-height:14px;color:#1c1c1c;letter-spacing:-0.100px;">81,80 $</span>
<div style="left:4px;top:408px;width:1787px;height:17px;background:#f0f0f0;"></div>
<div style="left:21px;top:409px;width:1740px;height:15px;background:#cdcdcd;"></div>
<div style="left:4px;top:425px;width:1787px;height:1px;background:#6a6a6a;"></div>
<svg style="left:8px;top:412px" width="7" height="9" viewBox="0 0 7 9"><path d="M5.500 1 2 4.500 5.500 8" fill="none" stroke="#333" stroke-width="1.800"/></svg>
<svg style="left:216px;top:268px" width="216" height="68" viewBox="216 268 216 68"><ellipse cx="324.200" cy="302.600" rx="103" ry="29.500" fill="none" stroke="#8c1a1c" stroke-width="3.600"/></svg>
<div style="left:435.0px;top:295.5px;width:29.0px;height:29.0px;background:#8a0709;border-radius:50%;"></div>
<span style="left:444.77px;top:300.50px;line-height:20px;font-size:17px;color:#fff;">3</span>
<div style="left:6px;top:432px;width:1785px;height:17px;background:#9ab3d3;"></div>
<span style="left:8.50px;top:432.50px;line-height:14px;color:#15202c;letter-spacing:-0.086px;">Paramètres</span>
<span style="left:9.00px;top:451.50px;line-height:14px;color:#333;letter-spacing:-0.028px;">Épinette Sec  2" x  4" x  8'  -  - Bois</span>
<div style="left:404px;top:451px;width:3px;height:340px;background:#050505;"></div>
<div style="left:1242px;top:451px;width:3px;height:340px;background:#050505;"></div>
<div style="left:12px;top:477.5px;width:344.5px;height:305.5px;border:1px solid #bcbcbc;"></div>
<div style="left:18px;top:475.5px;width:105px;height:5px;background:#fefefe;"></div>
<span style="left:20.00px;top:470.50px;line-height:14px;color:#333;letter-spacing:-0.136px;">Liste des paramètres</span>
<div style="left:25px;top:486px;width:61px;height:22.5px;background:#212633;"></div>
<div style="left:85.5px;top:488px;width:41.5px;height:20.5px;background:#212633;"></div>
<div style="left:25px;top:508px;width:323px;height:1.5px;background:#2a2d36;"></div>
<span style="left:34.00px;top:491.00px;line-height:14px;color:#fff;letter-spacing:-0.257px;">Systeme</span>
<span style="left:93.00px;top:491.50px;line-height:14px;color:#fff;letter-spacing:-0.013px;">Prive</span>
<div style="left:22.5px;top:509.5px;width:328.5px;height:34px;background:#fefefe;border-top:1px solid #8f8f8f;border-left:1px solid #8f8f8f;border-right:1px solid #e0e0e0;border-bottom:1px solid #e0e0e0;"></div>
<svg style="left:31.5px;top:518.0px;color:#6b6b6b;" width="17" height="17" viewBox="0 0 24 24"><path fill="currentColor" d="M9.6 2h4.8v7.6H22v4.8h-7.6V22H9.6v-7.6H2V9.6h7.6z"/></svg>
<svg style="left:60.8px;top:515.8px;color:#10202c;" width="21.5" height="21.5" viewBox="0 0 24 24"><path fill="currentColor" d="M8.400 1.600h7.200l1 2H23v3.200H1V3.600h6.400z"/><path fill="currentColor" fill-rule="evenodd" d="M2.600 8h18.800v12.500a2 2 0 0 1-2 2H4.600a2 2 0 0 1-2-2zM5.600 10.400v9.600h2v-9.600zm3.800 0v9.600h2v-9.600zm3.800 0v9.600h2v-9.600zm3.800 0v9.600h2v-9.600z"/></svg>
<svg style="left:96.5px;top:515.0px;color:#111;" width="23" height="23" viewBox="0 0 24 24"><ellipse cx="12" cy="5" rx="9.500" ry="3.300" fill="none" stroke="currentColor" stroke-width="2"/><path fill="currentColor" d="M2.800 6.500 10 14.500V23h4v-8.500l7.200-8z"/><path stroke="#fff" stroke-width="1.200" d="M10.300 8.800l3.400 3.400M13.700 8.800l-3.400 3.400"/></svg>
<svg style="left:129.0px;top:515.5px;color:#222;" width="22" height="22" viewBox="0 0 24 24"><rect x="7" y="8" width="15" height="2.800" fill="currentColor"/><rect x="2" y="13.500" width="15" height="2.800" fill="currentColor"/></svg>
<svg style="left:162.0px;top:516.5px;color:#2a2a2a;" width="19" height="19" viewBox="0 0 24 24"><path fill="none" stroke="currentColor" stroke-width="2" d="M3.500 2.500v18H22"/><path stroke="currentColor" stroke-width="2.400" d="M7.800 18v-5.500M11.600 18V8M15.400 18v-7M19.200 18V5.500"/></svg>
<svg style="left:193.5px;top:516.0px;color:#111;" width="21" height="21" viewBox="0 0 24 24"><path fill="currentColor" d="M6.200 2.500h11.600v5H6.200z"/><path fill="currentColor" d="M3.200 8.200h17.600c1.200 0 2.200 1 2.200 2.200v7.400h-4.400v-4.300H5.400v4.300H1v-7.400c0-1.200 1-2.200 2.200-2.200z"/><path fill="#fff" stroke="currentColor" stroke-width="1.800" d="M6.300 14.300h11.400v7.200H6.300z"/></svg>
<svg style="left:227.0px;top:517.0px;color:#333;" width="19" height="19" viewBox="0 0 24 24"><g fill="none" stroke="currentColor" stroke-width="2.300"><path d="M3.400 11.200A8.700 8.700 0 0 1 18.600 6.200"/><path d="M20.600 12.800A8.700 8.700 0 0 1 5.400 17.800"/></g><path fill="currentColor" d="M21.200 2v7.600h-7.600z"/><path fill="currentColor" d="M2.800 22v-7.600h7.600z"/></svg>
<svg style="left:258.5px;top:516.5px;color:#111;" width="20" height="20" viewBox="0 0 512 512"><path fill="currentColor" d="M497.9 142.1l-46.1 46.1c-4.7 4.7-12.3 4.7-17 0l-111-111c-4.7-4.7-4.7-12.3 0-17l46.1-46.1c18.7-18.7 49.1-18.7 67.900 0l60.1 60.1c18.8 18.700 18.8 49.100 0 67.900zM284.2 99.800L21.600 362.400.4 483.900c-2.900 16.400 11.400 30.600 27.800 27.800l121.500-21.300 262.600-262.600c4.700-4.700 4.700-12.300 0-17l-111-111c-4.800-4.700-12.400-4.700-17.100 0zM124.100 339.900c-5.500-5.500-5.500-14.300 0-19.800l154-154c5.500-5.500 14.300-5.500 19.800 0s5.500 14.300 0 19.800l-154 154c-5.500 5.500-14.300 5.500-19.800 0zM88 424h48v36.300l-64.500 11.300-31.100-31.100L51.700 376H88v48z"/></svg>
<svg style="left:289.5px;top:515.5px;color:#6e6e6e;" width="21" height="21" viewBox="0 0 24 24"><rect x="1.500" y="1.500" width="21" height="21" rx="2.500" fill="currentColor"/><path fill="#e8e8e8" d="M5.500 12.300 7.800 10l2.800 2.800L16.600 6.800l2.300 2.300L10.600 17.400z"/></svg>
<svg style="left:323.5px;top:516.0px;color:#5e5e5e;" width="21" height="21" viewBox="0 0 24 24"><rect x="3.300" y="22.500" width="17.400" height="1.500" fill="currentColor"/><path fill="currentColor" d="M7 0.300h10.400v12.500h3.800L12 20.200 3.300 12.800H7z"/><path fill="#fff" d="M11.200 3.600h2v2.500h2.500v2h-2.500v2.500h-2V8.100H8.700v-2h2.500z"/></svg>
<div style="left:22px;top:545px;width:330px;height:233px;background:#ffffff;border:1px solid #828282;"></div>
<div style="left:23px;top:566px;width:19.5px;height:194px;background:#eaeaea;"></div>
<div style="left:42px;top:566px;width:1px;height:194px;background:#cfcfcf;"></div>
<div style="left:42.5px;top:739.5px;width:291.5px;height:20px;background:#0a74d8;"></div>
<span style="left:46.50px;top:582.00px;line-height:14px;color:#1c1c1c;letter-spacing:-0.170px;">CUAutre</span>
<span style="left:136.50px;top:582.00px;line-height:14px;color:#1c1c1c;letter-spacing:0.372px;">Cout Unitaire Autre</span>
<span style="left:286.50px;top:582.00px;line-height:14px;color:#1c1c1c;">$</span>
<div style="left:23px;top:599px;width:19.5px;height:1px;background:#c4c4c4;"></div>
<div style="left:42.5px;top:599px;width:290.5px;height:1px;background:#ececec;"></div>
<span style="left:46.50px;top:602.00px;line-height:14px;color:#1c1c1c;letter-spacing:0.275px;">CoutUnit</span>
<span style="left:136.50px;top:602.00px;line-height:14px;color:#1c1c1c;letter-spacing:0.292px;">Coût Unitaire</span>
<span style="left:286.50px;top:602.00px;line-height:14px;color:#1c1c1c;">$</span>
<div style="left:23px;top:619px;width:19.5px;height:1px;background:#c4c4c4;"></div>
<div style="left:42.5px;top:619px;width:290.5px;height:1px;background:#ececec;"></div>
<span style="left:46.50px;top:622.00px;line-height:14px;color:#1c1c1c;letter-spacing:0.418px;">VendUnit</span>
<span style="left:136.50px;top:622.00px;line-height:14px;color:#1c1c1c;letter-spacing:0.128px;">Vendeur Unitaire</span>
<span style="left:286.50px;top:622.00px;line-height:14px;color:#1c1c1c;">$</span>
<div style="left:23px;top:639px;width:19.5px;height:1px;background:#c4c4c4;"></div>
<div style="left:42.5px;top:639px;width:290.5px;height:1px;background:#ececec;"></div>
<span style="left:46.50px;top:642.00px;line-height:14px;color:#1c1c1c;letter-spacing:-0.695px;">QRmo</span>
<span style="left:136.50px;top:642.00px;line-height:14px;color:#1c1c1c;letter-spacing:0.165px;">Quantité de rendement</span>
<div style="left:23px;top:659px;width:19.5px;height:1px;background:#c4c4c4;"></div>
<div style="left:42.5px;top:659px;width:290.5px;height:1px;background:#ececec;"></div>
<span style="left:46.50px;top:662.00px;line-height:14px;color:#1c1c1c;letter-spacing:-0.293px;">HRmo</span>
<span style="left:136.50px;top:662.00px;line-height:14px;color:#1c1c1c;letter-spacing:0.137px;">Heures de rendement</span>
<div style="left:23px;top:679px;width:19.5px;height:1px;background:#c4c4c4;"></div>
<div style="left:42.5px;top:679px;width:290.5px;height:1px;background:#ececec;"></div>
<span style="left:46.50px;top:682.00px;line-height:14px;color:#1c1c1c;letter-spacing:0.138px;">HrsAvantDif</span>
<span style="left:136.50px;top:682.00px;line-height:14px;color:#1c1c1c;letter-spacing:0.215px;">Heures Avant difficulté</span>
<span style="left:286.50px;top:682.00px;line-height:14px;color:#1c1c1c;">h</span>
<div style="left:23px;top:699px;width:19.5px;height:1px;background:#c4c4c4;"></div>
<div style="left:42.5px;top:699px;width:290.5px;height:1px;background:#ececec;"></div>
<span style="left:46.50px;top:702.00px;line-height:14px;color:#1c1c1c;letter-spacing:0.155px;">HrsAprèsDif</span>
<span style="left:136.50px;top:702.00px;line-height:14px;color:#1c1c1c;letter-spacing:0.224px;">Heures Après difficulté</span>
<span style="left:286.50px;top:702.00px;line-height:14px;color:#1c1c1c;">h</span>
<div style="left:23px;top:719px;width:19.5px;height:1px;background:#c4c4c4;"></div>
<div style="left:42.5px;top:719px;width:290.5px;height:1px;background:#ececec;"></div>
<span style="left:46.50px;top:722.00px;line-height:14px;color:#1c1c1c;letter-spacing:-0.778px;">CUSTC</span>
<span style="left:136.50px;top:722.00px;line-height:14px;color:#1c1c1c;letter-spacing:0.211px;">Coût Unitaire Sous-Traitant C</span>
<div style="left:282px;top:720px;width:51px;height:19px;background:#fff;"></div>
<span style="left:286.50px;top:722.00px;line-height:14px;color:#1c1c1c;">$</span>
<div style="left:23px;top:739px;width:19.5px;height:1px;background:#c4c4c4;"></div>
<div style="left:42.5px;top:739px;width:290.5px;height:1px;background:#ececec;"></div>
<span style="left:46.50px;top:742.00px;line-height:14px;color:#fff;letter-spacing:0.208px;">Inclus</span>
<span style="left:136.50px;top:742.00px;line-height:14px;color:#fff;letter-spacing:0.251px;">Item inclus = 1</span>
<span style="left:286.50px;top:742.00px;line-height:14px;color:#fff;letter-spacing:0.312px;">unit</span>
<div style="left:23px;top:759px;width:19.5px;height:1px;background:#c4c4c4;"></div>
<div style="left:132px;top:586px;width:1px;height:174px;background:#e4e4e4;"></div>
<div style="left:282px;top:586px;width:1px;height:174px;background:#e4e4e4;"></div>
<div style="left:132px;top:739.5px;width:1px;height:20px;background:#cfe4f7;"></div>
<div style="left:282px;top:739.5px;width:1px;height:20px;background:#cfe4f7;"></div>
<div style="left:23px;top:566px;width:19.5px;height:20px;background:#eeeeee;"></div>
<div style="left:42.5px;top:566px;width:290.5px;height:20px;background:#dff0f0;"></div>
<div style="left:23px;top:585.5px;width:19.5px;height:1px;background:#c4c4c4;"></div>
<div style="left:23px;top:546px;width:310px;height:20px;background:#212633;"></div>
<span style="left:72.88px;top:549.00px;line-height:14px;font-size:12px;font-weight:700;color:#fff;letter-spacing:-0.250px;">Code</span>
<span style="left:163.04px;top:549.00px;line-height:14px;font-size:12px;font-weight:700;color:#fff;letter-spacing:0.070px;">Nom par défaut</span>
<span style="left:275.03px;top:549.00px;line-height:14px;font-size:12px;font-weight:700;color:#fff;letter-spacing:0.055px;">Un. / défaut</span>
<div style="left:233px;top:546px;width:49px;height:20px;background:#212633;"></div>
<div style="left:332px;top:546px;width:19px;height:20px;background:#f0f0f0;"></div>
<span style="left:163.04px;top:549.00px;line-height:14px;font-size:12px;font-weight:700;color:#fff;letter-spacing:0.070px;">Nom par défaut</span>
<div style="left:42px;top:546px;width:1px;height:20px;background:#e8e8e8;"></div>
<div style="left:132px;top:546px;width:1px;height:20px;background:#e8e8e8;"></div>
<div style="left:282px;top:546px;width:1px;height:20px;background:#e8e8e8;"></div>
<div style="left:334px;top:546px;width:17px;height:214px;background:#f0f0f0;"></div>
<div style="left:335px;top:681px;width:15px;height:62px;background:#c9c9c9;"></div>
<svg style="left:338px;top:552px" width="9" height="6" viewBox="0 0 9 6"><path d="M1 5 4.500 1.500 8 5" fill="none" stroke="#505050" stroke-width="1.600"/></svg>
<svg style="left:338px;top:749px" width="9" height="6" viewBox="0 0 9 6"><path d="M1 1 4.500 4.500 8 1" fill="none" stroke="#505050" stroke-width="1.600"/></svg>
<div style="left:23px;top:760px;width:328px;height:17px;background:#f0f0f0;"></div>
<div style="left:40px;top:761px;width:154px;height:15px;background:#cdcdcd;"></div>
<svg style="left:28px;top:764px" width="6" height="9" viewBox="0 0 6 9"><path d="M5 1 1.500 4.500 5 8" fill="none" stroke="#505050" stroke-width="1.600"/></svg>
<svg style="left:323px;top:764px" width="6" height="9" viewBox="0 0 6 9"><path d="M1 1 4.500 4.500 1 8" fill="none" stroke="#505050" stroke-width="1.600"/></svg>
<div style="left:345.0px;top:732.0px;width:29.0px;height:29.0px;background:#8a0709;border-radius:50%;"></div>
<span style="left:354.77px;top:737.00px;line-height:20px;font-size:17px;color:#fff;">1</span>
<svg style="left:367.0px;top:526.5px;color:#707070;" width="27" height="27" viewBox="0 0 24 24"><g fill="none" stroke="currentColor" stroke-width="3.200" stroke-linecap="round" stroke-linejoin="round"><path d="M2 12h20M14 4 22 12l-8 8"/></g></svg>
<svg style="left:367.0px;top:566.5px;color:#0c1a26;" width="27" height="27" viewBox="0 0 24 24"><g fill="none" stroke="currentColor" stroke-width="3.200" stroke-linecap="round" stroke-linejoin="round"><path d="M22 12H2M10 4 2 12l8 8"/></g></svg>
<div style="left:416.5px;top:477.5px;width:806px;height:303.5px;border:1px solid #bcbcbc;"></div>
<div style="left:422.5px;top:475.5px;width:102px;height:5px;background:#fefefe;"></div>
<span style="left:424.50px;top:470.50px;line-height:14px;color:#333;letter-spacing:-0.177px;">Paramètres de l'item</span>
<div style="left:426px;top:492.5px;width:786.5px;height:34px;background:#fefefe;border-top:2px solid #8c8c8c;border-left:2px solid #8c8c8c;border-right:1px solid #e0e0e0;border-bottom:1px solid #e0e0e0;"></div>
<svg style="left:436.5px;top:498.0px;color:#0a0a0a;" width="23" height="23" viewBox="0 0 24 24"><path fill="currentColor" d="M9.6 2h4.8v7.6H22v4.8h-7.6V22H9.6v-7.6H2V9.6h7.6z"/></svg>
<svg style="left:473.0px;top:498.5px;color:#10202c;" width="22" height="22" viewBox="0 0 24 24"><path fill="currentColor" d="M8.400 1.600h7.200l1 2H23v3.200H1V3.600h6.400z"/><path fill="currentColor" fill-rule="evenodd" d="M2.600 8h18.800v12.500a2 2 0 0 1-2 2H4.600a2 2 0 0 1-2-2zM5.600 10.400v9.600h2v-9.600zm3.800 0v9.600h2v-9.600zm3.800 0v9.600h2v-9.600zm3.800 0v9.600h2v-9.600z"/></svg>
<svg style="left:510.8px;top:499.2px;color:#111;" width="19.5" height="19.5" viewBox="0 0 24 24"><g fill="none" stroke="currentColor" stroke-width="2.300"><path d="M4 1.400h16"/><path d="M12 22.500V5M4.600 12 12 4.600l7.400 7.400"/></g></svg>
<svg style="left:543.0px;top:500.5px;color:#111;" width="19" height="19" viewBox="0 0 24 24"><g fill="none" stroke="currentColor" stroke-width="2.400"><path d="M12 24V4M4.200 11.400 12 3.600l7.800 7.400"/></g></svg>
<svg style="left:574.5px;top:500.5px;color:#111;" width="19" height="19" viewBox="0 0 24 24"><g fill="none" stroke="currentColor" stroke-width="2.400"><path d="M12 2V22M4.200 14.600 12 22.400l7.800-7.800"/></g></svg>
<svg style="left:606.2px;top:500.2px;color:#111;" width="19.5" height="19.5" viewBox="0 0 24 24"><g fill="none" stroke="currentColor" stroke-width="2.300"><path d="M4 22.800h16"/><path d="M12 1.500V19M4.600 12 12 19.400l7.400-7.400"/></g></svg>
<svg style="left:641.5px;top:498.5px;color:#0a0a0a;" width="22" height="22" viewBox="0 0 24 24"><rect x="1.500" y="5" width="21" height="5.400" fill="currentColor"/><rect x="1.500" y="13.600" width="21" height="5.400" fill="currentColor"/></svg>
<svg style="left:673.5px;top:498.0px;color:#9a9a9a;" width="23" height="23" viewBox="0 0 24 24"><text x="3" y="18" font-family="Liberation Serif, serif" font-style="italic" font-size="19" fill="currentColor">fx</text><path stroke="currentColor" stroke-width="1.200" d="M3 12.500h19"/></svg>
<svg style="left:706.5px;top:498.5px;color:#111;" width="22" height="22" viewBox="0 0 24 24"><path fill="none" stroke="currentColor" stroke-width="1.700" stroke-linejoin="round" d="M4.500 18V2.500h9.500l5.500 5.500v10"/><path fill="none" stroke="currentColor" stroke-width="1.300" d="M13.800 2.700v5.500h5.500"/><rect x="1.500" y="18.500" width="21" height="3.600" fill="currentColor"/><path stroke="#fff" stroke-width="1" d="M5 20.300v1.800M8.500 20.300v1.800M12 20.300v1.800M15.500 20.300v1.800M19 20.300v1.800"/></svg>
<svg style="left:740.0px;top:500.0px;color:#111;" width="19" height="19" viewBox="0 0 24 24"><path fill="none" stroke="currentColor" stroke-width="2.700" stroke-linejoin="miter" d="M2.400 2.400h15.800l3.400 3.400v15.800H2.400z"/><path fill="currentColor" d="M6 2.400h10.600v7.600H6z"/><rect x="12.400" y="3.800" width="2.300" height="4.600" fill="#fff"/></svg>
<svg style="left:771.5px;top:500.0px;color:#111;" width="19" height="19" viewBox="0 0 24 24"><path fill="#8a8a8a" d="M0.500 17 9.500 7.600h8L9 17z"/><path fill="#1a6fc4" d="M12.500 12.300 18 7.400 23.500 12.300 18 17.200z"/><circle cx="16.300" cy="12.300" r="2" fill="#fff"/></svg>
<svg style="left:803.5px;top:499.5px;color:#555;" width="20" height="20" viewBox="0 0 24 24"><path fill="none" stroke="currentColor" stroke-width="1.600" stroke-linejoin="round" d="M6.500 18.500H3.600V2.600h9.600l2 2"/><path fill="#fff" stroke="currentColor" stroke-width="1.600" stroke-linejoin="round" d="M7.400 5.400h7.800l5 5V22H7.400z"/><path fill="none" stroke="currentColor" stroke-width="1.300" d="M14.800 5.600v5.200h5.200"/></svg>
<svg style="left:835.5px;top:500.0px;color:#a8a8a8;" width="19" height="19" viewBox="0 0 24 24"><path fill="none" stroke="currentColor" stroke-width="1.6" stroke-linejoin="round" d="M9 16.400H3.400V4.200h3.400M13 4.200h3.400v4"/><path fill="none" stroke="currentColor" stroke-width="1.5" stroke-linejoin="round" d="M7 5.600V2.800h2.200c0-1.800 1.600-1.800 1.600 0H13v2.800z"/><path fill="#fff" stroke="currentColor" stroke-width="1.6" stroke-linejoin="round" d="M9.600 9h6.600l4.200 4v9.200H9.600z"/><path fill="none" stroke="currentColor" stroke-width="1.3" d="M16 9.200v4h4.200"/></svg>
<div style="left:426px;top:528px;width:786.5px;height:249.5px;background:#a9a9a9;border:1px solid #6f6f6f;"></div>
<div style="left:427px;top:529px;width:511px;height:20px;background:#212633;"></div>
<div style="left:427px;top:549px;width:19px;height:120px;background:#ececec;"></div>
<div style="left:446px;top:549px;width:492px;height:20px;background:#dff0f0;"></div>
<div style="left:446px;top:569px;width:492px;height:100px;background:#ffffff;"></div>
<div style="left:427px;top:568.5px;width:19px;height:1px;background:#c4c4c4;"></div>
<div style="left:446px;top:568.5px;width:492px;height:1px;background:#ececec;"></div>
<div style="left:427px;top:588.5px;width:19px;height:1px;background:#c4c4c4;"></div>
<div style="left:446px;top:588.5px;width:492px;height:1px;background:#ececec;"></div>
<div style="left:427px;top:608.5px;width:19px;height:1px;background:#c4c4c4;"></div>
<div style="left:446px;top:608.5px;width:492px;height:1px;background:#ececec;"></div>
<div style="left:427px;top:628.5px;width:19px;height:1px;background:#c4c4c4;"></div>
<div style="left:446px;top:628.5px;width:492px;height:1px;background:#ececec;"></div>
<div style="left:427px;top:648.5px;width:19px;height:1px;background:#c4c4c4;"></div>
<div style="left:427px;top:668.5px;width:19px;height:1px;background:#c4c4c4;"></div>
<div style="left:537.0px;top:569px;width:1px;height:80px;background:#ebebeb;"></div>
<div style="left:687.5px;top:569px;width:1px;height:80px;background:#ebebeb;"></div>
<div style="left:737.5px;top:569px;width:1px;height:80px;background:#ebebeb;"></div>
<div style="left:787.5px;top:569px;width:1px;height:80px;background:#ebebeb;"></div>
<div style="left:837.5px;top:569px;width:1px;height:80px;background:#ebebeb;"></div>
<div style="left:887.5px;top:569px;width:1px;height:80px;background:#ebebeb;"></div>
<span style="left:835.75px;top:531.00px;line-height:16px;font-size:12px;font-weight:700;color:#fff;letter-spacing:0.500px;text-decoration:underline;">Constant</span>
<div style="left:788px;top:529px;width:50px;height:20px;background:#212633;"></div>
<div style="left:888px;top:529px;width:50px;height:20px;background:#212633;"></div>
<span style="left:477.38px;top:531.00px;line-height:16px;font-size:12px;font-weight:700;color:#fff;letter-spacing:-0.250px;">Code</span>
<span style="left:539.49px;top:531.00px;line-height:16px;font-size:12px;font-weight:700;color:#fff;letter-spacing:-0.029px;">Nom des param. / Options</span>
<span style="left:693.61px;top:531.00px;line-height:16px;font-size:12px;font-weight:700;color:#fff;letter-spacing:0.224px;">Option</span>
<span style="left:744.66px;top:531.00px;line-height:16px;font-size:12px;font-weight:700;color:#fff;letter-spacing:0.328px;text-decoration:underline;">Valeur</span>
<span style="left:798.50px;top:531.00px;line-height:16px;font-size:12px;font-weight:700;color:#fff;">Unité</span>
<span style="left:890.66px;top:531.00px;line-height:16px;font-size:12px;font-weight:700;color:#fff;letter-spacing:0.315px;">TakeOff</span>
<div style="left:445.5px;top:529px;width:1.5px;height:20px;background:#e8e8e8;"></div>
<div style="left:537.0px;top:529px;width:1.5px;height:20px;background:#e8e8e8;"></div>
<div style="left:687.5px;top:529px;width:1.5px;height:20px;background:#e8e8e8;"></div>
<div style="left:737.5px;top:529px;width:1.5px;height:20px;background:#e8e8e8;"></div>
<div style="left:787.5px;top:529px;width:1.5px;height:20px;background:#e8e8e8;"></div>
<div style="left:837.5px;top:529px;width:1.5px;height:20px;background:#e8e8e8;"></div>
<div style="left:887.5px;top:529px;width:1.5px;height:20px;background:#e8e8e8;"></div>
<div style="left:937.5px;top:529px;width:1.5px;height:20px;background:#e8e8e8;"></div>
<span style="left:450.00px;top:570.70px;line-height:14px;color:#1c1c1c;letter-spacing:-0.953px;">C</span>
<span style="left:542.00px;top:570.70px;line-height:14px;color:#1c1c1c;letter-spacing:0.105px;">Longueur par Morceaux</span>
<span style="left:692.00px;top:570.70px;line-height:14px;color:#1c1c1c;letter-spacing:-0.062px;">Non</span>
<span style="left:761.16px;top:570.70px;line-height:14px;font-size:12px;font-weight:700;color:#111;letter-spacing:0.160px;">8,00</span>
<span style="left:792.00px;top:570.70px;line-height:14px;color:#1c1c1c;letter-spacing:0.719px;">pi</span>
<div style="left:857px;top:572px;width:13px;height:13px;background:linear-gradient(135deg,#f6f6f8 30%,#fff 80%);border:1px solid #909096;box-shadow:inset 1px 1px 0 #fbfbfb,inset 3px 3px 0 rgba(150,150,158,.75);"></div>
<svg style="left:859px;top:574px" width="9" height="9" viewBox="0 0 9 9"><path d="M1 4.500 3.500 7.500 8 1" fill="none" stroke="#3a32a0" stroke-width="2"/></svg>
<span style="left:450.00px;top:590.70px;line-height:14px;color:#1c1c1c;letter-spacing:-0.562px;">Q</span>
<span style="left:542.00px;top:590.70px;line-height:14px;color:#1c1c1c;letter-spacing:0.176px;">Quantité</span>
<span style="left:692.00px;top:590.70px;line-height:14px;color:#1c1c1c;letter-spacing:0.450px;">Validation</span>
<div style="left:736.8px;top:589px;width:2px;height:19.5px;background:#fff;"></div>
<div style="left:738px;top:589px;width:49.5px;height:19.5px;background:linear-gradient(90deg,#fdf0de,#fffaf2);"></div>
<span style="left:764.64px;top:590.70px;line-height:14px;color:#111;letter-spacing:-0.355px;text-decoration:underline;">0,00</span>
<span style="left:792.00px;top:590.70px;line-height:14px;color:#1c1c1c;letter-spacing:-0.057px;">Mcx</span>
<div style="left:857px;top:592px;width:13px;height:13px;background:linear-gradient(135deg,#f6f6f8 30%,#fff 80%);border:1px solid #909096;box-shadow:inset 1px 1px 0 #fbfbfb,inset 3px 3px 0 rgba(150,150,158,.75);"></div>
<span style="left:450.00px;top:610.70px;line-height:14px;color:#1c1c1c;letter-spacing:-0.227px;">FA</span>
<span style="left:542.00px;top:610.70px;line-height:14px;color:#1c1c1c;letter-spacing:0.192px;">Facteur Arrondissement</span>
<span style="left:692.00px;top:610.70px;line-height:14px;color:#1c1c1c;letter-spacing:-0.011px;">Special</span>
<div style="left:738px;top:609px;width:49.5px;height:19.5px;background:linear-gradient(90deg,#ffe870,#fff3b0);"></div>
<span style="left:761.16px;top:610.70px;line-height:14px;font-size:12px;font-weight:700;color:#111;letter-spacing:0.160px;">1,00</span>
<span style="left:792.00px;top:610.70px;line-height:14px;color:#1c1c1c;letter-spacing:-0.057px;">Mcx</span>
<div style="left:857px;top:612px;width:13px;height:13px;background:linear-gradient(135deg,#f6f6f8 30%,#fff 80%);border:1px solid #909096;box-shadow:inset 1px 1px 0 #fbfbfb,inset 3px 3px 0 rgba(150,150,158,.75);"></div>
<span style="left:450.00px;top:630.70px;line-height:14px;color:#1c1c1c;letter-spacing:-0.641px;">QF</span>
<span style="left:542.00px;top:630.70px;line-height:14px;color:#1c1c1c;letter-spacing:0.204px;">Quantité finale</span>
<span style="left:692.00px;top:630.70px;line-height:14px;color:#1c1c1c;letter-spacing:-0.062px;">Non</span>
<span style="left:764.64px;top:630.70px;line-height:14px;color:#111;letter-spacing:-0.355px;text-decoration:underline;">0,00</span>
<span style="left:792.00px;top:630.70px;line-height:14px;color:#1c1c1c;letter-spacing:-0.057px;">Mcx</span>
<div style="left:857px;top:632px;width:13px;height:13px;background:linear-gradient(135deg,#f6f6f8 30%,#fff 80%);border:1px solid #909096;box-shadow:inset 1px 1px 0 #fbfbfb,inset 3px 3px 0 rgba(150,150,158,.75);"></div>
<span style="left:450.00px;top:651.50px;line-height:14px;color:#1c1c1c;letter-spacing:0.208px;">Inclus</span>
<span style="left:542.00px;top:651.50px;line-height:14px;color:#1c1c1c;letter-spacing:0.251px;">Item inclus = 1</span>
<span style="left:692.00px;top:651.50px;line-height:14px;color:#1c1c1c;letter-spacing:0.043px;">Standard</span>
<div style="left:739px;top:651px;width:48px;height:17px;background:#f4aa00;border-top:1px solid #2a3a78;border-left:1px solid #8a7a40;"></div>
<span style="left:764.64px;top:651.50px;line-height:14px;color:#111;letter-spacing:-0.355px;text-decoration:underline;">0,00</span>
<span style="left:792.00px;top:651.50px;line-height:14px;color:#1c1c1c;letter-spacing:0.312px;">unit</span>
<div style="left:857px;top:652px;width:13px;height:13px;background:linear-gradient(135deg,#f6f6f8 30%,#fff 80%);border:1px solid #909096;box-shadow:inset 1px 1px 0 #fbfbfb,inset 3px 3px 0 rgba(150,150,158,.75);"></div>
<div style="left:446px;top:648.5px;width:492px;height:2px;background:#0a0a0a;"></div>
<div style="left:446px;top:666px;width:492px;height:2.5px;background:#0a0a0a;"></div>
<div style="left:857px;top:552px;width:13px;height:13px;background:linear-gradient(135deg,#1f6f96,#3aa0c0);border:1px solid #5a6a7a;box-shadow:inset 0 0 0 1px #cfe6ee;"></div>
<svg style="left:562.500px;top:659px" width="14" height="22" viewBox="0 0 14 22"><path d="M1 1v16.500l3.800-3.600 2.600 6.300 2.500-1-2.600-6.200h5.200z" fill="#fff" stroke="#111" stroke-width="1.200" stroke-linejoin="round"/></svg>
<span style="left:1258.00px;top:457.00px;line-height:14px;color:#222;letter-spacing:0.094px;">Formule</span>
<div style="left:1306px;top:453px;width:73px;height:22px;background:#232834;"></div>
<span style="left:1315.00px;top:457.00px;line-height:14px;color:#fff;letter-spacing:0.270px;">Description</span>
<div style="left:1251px;top:495px;width:560px;height:287.5px;border:1px solid #a8a8a8;"></div>
<span style="left:1311.00px;top:514.00px;line-height:14px;color:#222;letter-spacing:0.048px;">Paramètre :</span>
<span style="left:1311.00px;top:537.50px;line-height:14px;color:#222;letter-spacing:0.222px;">De l'item :</span>
<div style="left:1381px;top:513px;width:430px;height:19.5px;background:#fff;border-top:1px solid #a6a6a6;border-left:1px solid #a6a6a6;border-bottom:1px solid #e6e6e6;border-right:1px solid #e6e6e6;"></div>
<div style="left:1381px;top:537px;width:430px;height:19.5px;background:#fff;border-top:1px solid #a6a6a6;border-left:1px solid #a6a6a6;border-bottom:1px solid #e6e6e6;border-right:1px solid #e6e6e6;"></div>
<span style="left:1384.50px;top:515.50px;line-height:14px;color:#222;letter-spacing:0.251px;">Item inclus = 1</span>
<span style="left:1384.50px;top:539.50px;line-height:14px;color:#222;letter-spacing:-0.075px;">Épinette Sec  2" x  4" x  8'</span>
<div style="left:1312.5px;top:568.5px;width:357.5px;height:52px;border:1px solid #bcbcbc;"></div>
<div style="left:1320px;top:566.5px;width:37px;height:5px;background:#fefefe;"></div>
<span style="left:1322.00px;top:561.50px;line-height:14px;color:#333;letter-spacing:0.169px;">Valeur</span>
<div style="left:1327.5px;top:579px;width:12px;height:12px;background:#fff;border-radius:50%;border:1.500px solid;border-color:#5a5a5a #e4e4e4 #e4e4e4 #5a5a5a;transform:rotate(0deg);"></div>
<div style="left:1327.5px;top:600.5px;width:12px;height:12px;background:#fff;border-radius:50%;border:1.500px solid;border-color:#5a5a5a #e4e4e4 #e4e4e4 #5a5a5a;transform:rotate(0deg);"></div>
<div style="left:1331.0px;top:604.0px;width:5px;height:5px;background:#111;border-radius:50%;"></div>
<span style="left:1345.50px;top:578.00px;line-height:14px;color:#222;letter-spacing:-0.180px;">Manuel</span>
<span style="left:1345.50px;top:600.00px;line-height:14px;color:#222;letter-spacing:0.094px;">Formule</span>
<div style="left:1407px;top:574px;width:132px;height:19px;background:#e9e9e9;border-top:1px solid #b4b4b4;border-left:1px solid #b4b4b4;border-bottom:1px solid #d4d4d4;border-right:1px solid #d4d4d4;"></div>
<div style="left:1552px;top:574px;width:88px;height:19px;background:#fff;border-top:1px solid #a0a0a0;border-left:1px solid #a0a0a0;border-bottom:1px solid #d4d4d4;border-right:1px solid #d4d4d4;"></div>
<div style="left:1407px;top:596px;width:132px;height:19.5px;background:#fff;border-top:1px solid #7a7a7a;border-left:1px solid #7a7a7a;border-bottom:1px solid #b0b0b0;border-right:1px solid #b0b0b0;"></div>
<div style="left:1552px;top:596px;width:88px;height:19.5px;background:#fff;border-top:1px solid #7a7a7a;border-left:1px solid #7a7a7a;border-bottom:1px solid #b0b0b0;border-right:1px solid #b0b0b0;"></div>
<span style="left:1409.50px;top:597.70px;line-height:14px;color:#222;">0</span>
<span style="left:1554.00px;top:597.70px;line-height:14px;color:#222;letter-spacing:0.312px;">unit</span>
<div style="left:1640px;top:574px;width:20px;height:19px;background:#f0f0f0;border:1px solid #adadad;"></div>
<div style="left:1640px;top:596px;width:20px;height:19.5px;background:#f0f0f0;border:1px solid #7a7a7a;"></div>
<span style="left:1645.41px;top:577.50px;line-height:14px;color:#8a8a8a;">...</span>
<span style="left:1645.41px;top:599.50px;line-height:14px;color:#111;">...</span>
<svg style="left:1269.0px;top:601.0px;color:#555;" width="17" height="17" viewBox="0 0 24 24"><g fill="none" stroke="currentColor" stroke-width="3.200" stroke-linecap="round" stroke-linejoin="round"><path d="M2 12h20M14 4 22 12l-8 8"/></g></svg>
<div style="left:1309px;top:627px;width:500px;height:30.5px;background:#fefefe;border-top:2px solid #7a7a7a;border-left:2px solid #8a8a8a;border-bottom:1px solid #e0e0e0;"></div>
<svg style="left:1317.5px;top:633.0px;color:#0a0a0a;" width="20" height="20" viewBox="0 0 512 512"><path fill="currentColor" d="M497.9 142.1l-46.1 46.1c-4.7 4.7-12.3 4.7-17 0l-111-111c-4.7-4.7-4.7-12.3 0-17l46.1-46.1c18.7-18.7 49.1-18.7 67.900 0l60.1 60.1c18.8 18.700 18.8 49.100 0 67.900zM284.2 99.800L21.600 362.400.4 483.900c-2.900 16.400 11.400 30.600 27.800 27.800l121.500-21.300 262.600-262.600c4.700-4.700 4.700-12.300 0-17l-111-111c-4.800-4.700-12.400-4.700-17.100 0zM124.100 339.900c-5.500-5.500-5.500-14.300 0-19.800l154-154c5.500-5.500 14.300-5.500 19.800 0s5.500 14.300 0 19.800l-154 154c-5.500 5.500-14.300 5.500-19.800 0zM88 424h48v36.300l-64.500 11.300-31.100-31.100L51.700 376H88v48z"/></svg>
<svg style="left:1350.5px;top:634.5px;color:#6a6a6a;" width="17" height="17" viewBox="0 0 24 24"><path fill="none" stroke="currentColor" stroke-width="2.700" stroke-linejoin="miter" d="M2.400 2.400h15.800l3.400 3.400v15.800H2.400z"/><path fill="currentColor" d="M6 2.400h10.600v7.600H6z"/><rect x="12.400" y="3.800" width="2.300" height="4.600" fill="#fff"/></svg>
<svg style="left:1380.8px;top:632.8px;color:#6a6a6a;" width="20.5" height="20.5" viewBox="0 0 24 24"><path fill="none" stroke="currentColor" stroke-width="1.700" stroke-linejoin="round" d="M3.500 1.500h11l6 6V22.500h-17z"/><path fill="none" stroke="currentColor" stroke-width="1.300" d="M14.300 1.700v6h6"/><text x="12.200" y="20.300" text-anchor="middle" font-family="Liberation Sans, sans-serif" font-weight="700" font-size="18" fill="currentColor">x</text></svg>
<svg style="left:1414.0px;top:634.0px;color:#8a8a8a;" width="18" height="18" viewBox="0 0 24 24"><path fill="none" stroke="currentColor" stroke-width="1.600" stroke-linejoin="round" d="M6.500 18.500H3.600V2.600h9.600l2 2"/><path fill="#fff" stroke="currentColor" stroke-width="1.600" stroke-linejoin="round" d="M7.400 5.400h7.800l5 5V22H7.400z"/><path fill="none" stroke="currentColor" stroke-width="1.300" d="M14.800 5.600v5.200h5.200"/></svg>
<svg style="left:1446.5px;top:634.0px;color:#8a8a8a;" width="18" height="18" viewBox="0 0 24 24"><path fill="none" stroke="currentColor" stroke-width="1.6" stroke-linejoin="round" d="M9 16.400H3.400V4.200h3.400M13 4.200h3.400v4"/><path fill="none" stroke="currentColor" stroke-width="1.5" stroke-linejoin="round" d="M7 5.600V2.800h2.200c0-1.800 1.600-1.800 1.600 0H13v2.800z"/><path fill="#fff" stroke="currentColor" stroke-width="1.6" stroke-linejoin="round" d="M9.600 9h6.600l4.200 4v9.200H9.600z"/><path fill="none" stroke="currentColor" stroke-width="1.3" d="M16 9.200v4h4.200"/></svg>
<svg style="left:1480.0px;top:635.5px;color:#505050;" width="15" height="15" viewBox="0 0 512 512"><g transform="translate(0,-36.5) scale(1,1.14)"><path fill="currentColor" d="M8.309 189.836L184.313 37.851C199.719 24.546 224 35.347 224 56.015v80.053c160.629 1.839 288 34.032 288 186.258 0 61.441-39.581 122.309-83.333 154.132-13.653 9.931-33.111-2.533-28.077-18.631 45.344-145.012-21.507-183.510-176.590-185.742V360c0 20.700-24.300 31.453-39.687 18.164l-176.004-152c-11.071-9.562-11.086-26.753 0-36.328z"/></g></svg>
<svg style="left:1514.5px;top:634.0px;color:#9a9a9a;" width="18" height="18" viewBox="0 0 24 24"><text x="3" y="18" font-family="Liberation Serif, serif" font-style="italic" font-size="19" fill="currentColor">fx</text></svg>
<svg style="left:1545.0px;top:632.0px;color:#8a8a8a;" width="20" height="20" viewBox="0 0 24 24"><text x="12" y="16" text-anchor="middle" font-family="Liberation Serif, serif" font-size="15" fill="currentColor">“T”</text></svg>
<svg style="left:1576.0px;top:631.5px;color:#777;" width="21" height="21" viewBox="0 0 24 24"><rect x="1.500" y="10" width="21" height="4.200" fill="currentColor"/><path stroke="#fff" stroke-width="1" d="M4.500 12v2.200M7.500 12v2.200M10.500 12v2.200M13.500 12v2.200M16.500 12v2.200M19.500 12v2.200"/></svg>
<svg style="left:1608.5px;top:632.5px;color:#111;" width="21" height="21" viewBox="0 0 24 24"><path fill="none" stroke="currentColor" stroke-width="1.700" stroke-linejoin="round" d="M4.500 18V2.500h9.500l5.500 5.500v10"/><path fill="none" stroke="currentColor" stroke-width="1.300" d="M13.800 2.700v5.500h5.500"/><rect x="1.500" y="18.500" width="21" height="3.600" fill="currentColor"/><path stroke="#fff" stroke-width="1" d="M5 20.300v1.800M8.500 20.300v1.800M12 20.300v1.800M15.500 20.300v1.800M19 20.300v1.800"/></svg>
<div style="left:1309px;top:659.5px;width:500px;height:100px;background:#fff;border-top:2px solid #6a6a6a;border-left:2px solid #7a7a7a;border-bottom:1px solid #e0e0e0;"></div>
<span style="left:1312.50px;top:663.50px;line-height:16px;font-size:13px;color:#1f2fb4;font-family:'Liberation Mono', monospace;">if</span>
<span style="left:1312.50px;top:663.50px;line-height:16px;font-size:13px;color:#3a3a3a;font-family:'Liberation Mono', monospace;">   (</span>
<span style="left:1312.50px;top:663.50px;line-height:16px;font-size:13px;color:#1f2fb4;font-family:'Liberation Mono', monospace;">    [QF]</span>
<span style="left:1312.50px;top:663.50px;line-height:16px;font-size:13px;color:#3a3a3a;font-family:'Liberation Mono', monospace;">        =0;0;1)</span>
<div style="left:1458px;top:659px;width:30px;height:30px;background:#8a0709;border-radius:50%;"></div>
<span style="left:1468.27px;top:664.50px;line-height:20px;font-size:17px;color:#fff;">2</span>
<span style="left:1576.00px;top:779.30px;line-height:24px;font-size:20px;color:#b4b4b4;letter-spacing:-0.115px;">Activate Windows</span>
</div>
</body></html>
